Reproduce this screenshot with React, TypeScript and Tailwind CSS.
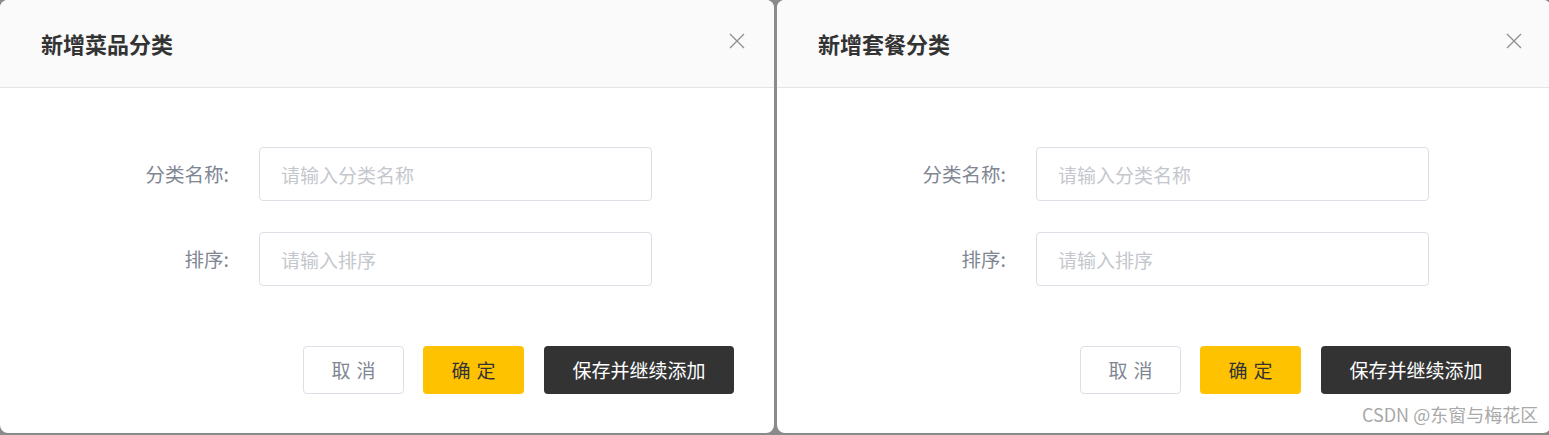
import React from "react";

const font = { fontFamily: '"Noto Sans CJK SC", "Noto Sans", sans-serif' };

function CloseIcon() {
  return (
    <svg width="16" height="16" viewBox="0 0 16 16" className="text-[#8f8f8f]">
      <path d="M1 1 L15 15 M15 1 L1 15" stroke="currentColor" strokeWidth="1.3" fill="none" />
    </svg>
  );
}

function Field({ label, placeholder }: { label: string; placeholder: string }) {
  return (
    <div className="flex items-center">
      <label className="w-[232px] pr-[3px] text-right text-[19.5px] text-[#818693]">{label}</label>
      <input
        readOnly
        placeholder={placeholder}
        className="ml-[27px] w-[393px] h-[54px] rounded-[4px] border border-[#dcdfe6] bg-white pl-[21px] text-[19px] outline-none placeholder:text-[#c4c7cd]"
        style={font}
      />
    </div>
  );
}

function CategoryDialog({ title }: { title: string }) {
  return (
    <div className="w-[774px] h-[433px] shrink-0 rounded-[8px] bg-white overflow-hidden flex flex-col">
      {/* Header */}
      <header className="h-[88px] shrink-0 flex items-center justify-between pl-[41px] pr-[29px] bg-[#fafafa] border-b border-[#e4e4e4]">
        <h2 className="text-[22px] font-bold text-[#333333]">{title}</h2>
        <div className="mb-[6px]">
          <CloseIcon />
        </div>
      </header>

      {/* Form */}
      <div className="pt-[59px] flex flex-col gap-[31px]">
        <Field label="分类名称:" placeholder="请输入分类名称" />
        <Field label="排序:" placeholder="请输入排序" />
      </div>

      {/* Footer */}
      <div className="mt-[60px] pl-[303px] flex items-center gap-[19px]">
        <button className="w-[101px] h-[48px] rounded-[4px] border border-[#dcdfe6] bg-white text-[19px] text-[#818693] tracking-[6px] pl-[6px]">
          取消
        </button>
        <button className="w-[101px] h-[48px] rounded-[4px] bg-[#ffc200] text-[19px] text-[#333333] tracking-[6px] pl-[6px]">
          确定
        </button>
        <button className="ml-[1px] w-[190px] h-[48px] rounded-[4px] bg-[#333333] text-[19px] text-white">
          保存并继续添加
        </button>
      </div>
    </div>
  );
}

export default function App() {
  return (
    <div className="relative w-[1549px] h-[435px] overflow-hidden bg-[#8a8a8a]" style={font}>
      <div className="flex gap-[3px]">
        <CategoryDialog title="新增菜品分类" />
        <CategoryDialog title="新增套餐分类" />
      </div>

      {/* Watermark */}
      <div className="absolute left-[1362px] top-[402px] text-[18px] leading-[24px] text-[#a9a9a9] whitespace-nowrap">
        CSDN @东窗与梅花区
      </div>
    </div>
  );
}
